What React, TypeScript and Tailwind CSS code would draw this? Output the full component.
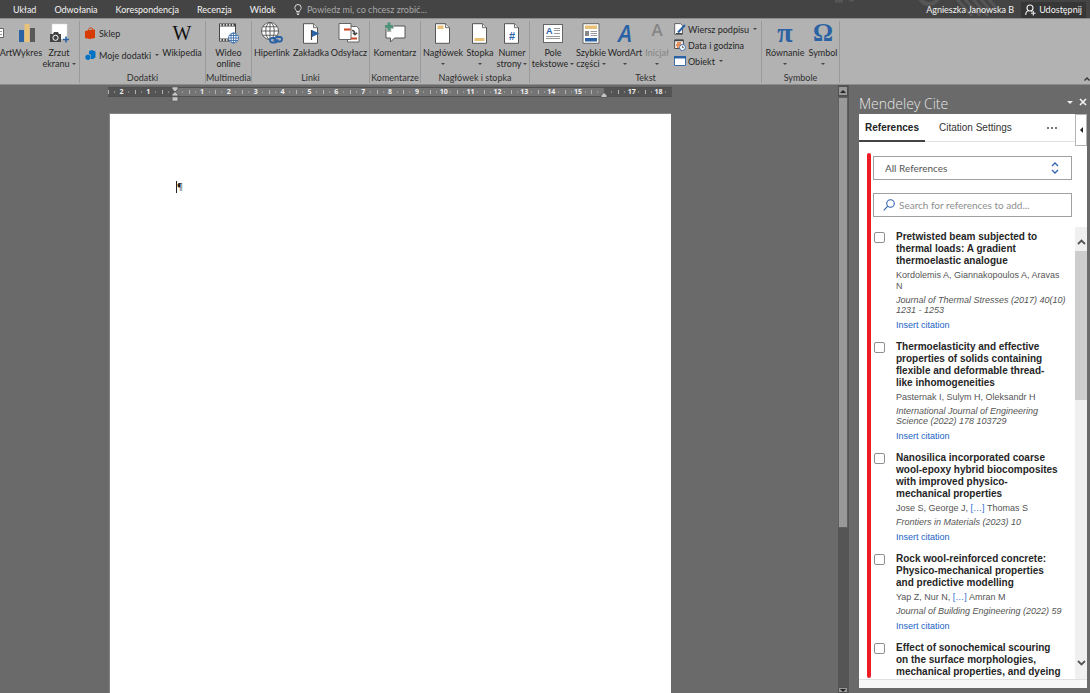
import React from "react";

type Reference = {
  title: string[];
  authors: React.ReactNode;
  journal?: string;
};

const references: Reference[] = [
  {
    title: ["Pretwisted beam subjected to", "thermal loads: A gradient", "thermoelastic analogue"],
    authors: (
      <>
        Kordolemis A, Giannakopoulos A, Aravas
        <br />N
      </>
    ),
    journal: "Journal of Thermal Stresses (2017) 40(10)\n1231 - 1253",
  },
  {
    title: ["Thermoelasticity and effective", "properties of solids containing", "flexible and deformable thread-", "like inhomogeneities"],
    authors: "Pasternak I, Sulym H, Oleksandr H",
    journal: "International Journal of Engineering\nScience (2022) 178 103729",
  },
  {
    title: ["Nanosilica incorporated coarse", "wool-epoxy hybrid biocomposites", "with improved physico-", "mechanical properties"],
    authors: (
      <>
        Jose S, George J, <MoreAuthors /> Thomas S
      </>
    ),
    journal: "Frontiers in Materials (2023) 10",
  },
  {
    title: ["Rock wool-reinforced concrete:", "Physico-mechanical properties", "and predictive modelling"],
    authors: (
      <>
        Yap Z, Nur N, <MoreAuthors /> Amran M
      </>
    ),
    journal: "Journal of Building Engineering (2022) 59",
  },
  {
    title: ["Effect of sonochemical scouring", "on the surface morphologies,", "mechanical properties, and dyeing"],
    authors: "",
  },
];

function MoreAuthors() {
  return <button type="button" className="text-[#2f6fd0]">[…]</button>;
}

function Arrow({ className = "" }: { className?: string }) {
  return (
    <svg viewBox="0 0 4 2" className={`inline-block h-[2px] w-1 shrink-0 fill-[#444] ${className}`}>
      <path d="M0 0h4L2 2z" />
    </svg>
  );
}

function Tool({
  width,
  icon,
  label,
  second,
  arrow,
  disabled,
}: {
  width: string;
  icon: React.ReactNode;
  label: string;
  second?: string;
  arrow?: boolean;
  disabled?: boolean;
}) {
  return (
    <button
      type="button"
      disabled={disabled}
      className={`flex shrink-0 flex-col items-center whitespace-nowrap ${width} ${disabled ? "text-[#858585]" : "text-[#262626]"}`}
    >
      <span className="mb-[2px] flex h-6 items-center justify-center">{icon}</span>
      <span className="leading-[11px]">{label}</span>
      <span className="flex h-[11px] items-center gap-[2px] leading-[11px]">
        {second}
        {arrow && <Arrow />}
      </span>
    </button>
  );
}

function SmallTool({ icon, label, arrow, gap = "ml-1" }: { icon: React.ReactNode; label: string; arrow?: boolean; gap?: string }) {
  return (
    <button type="button" className="flex h-4 items-center whitespace-nowrap text-[#262626]">
      <span className="flex w-[14px] shrink-0 items-center">{icon}</span>
      <span>{label}</span>
      {arrow && <Arrow className={gap} />}
    </button>
  );
}

function Group({ width, name, children }: { width: string; name: string; children: React.ReactNode }) {
  return (
    <section aria-label={name} className={`flex shrink-0 flex-col border-r border-[#999] ${width}`}>
      <div className="flex flex-1">{children}</div>
      <div className="h-[11px] text-center leading-[11px] whitespace-nowrap text-[#303030]">{name}</div>
    </section>
  );
}

const ChartIcon = () => (
  <svg viewBox="0 0 18 20" className="h-5 w-[18px]">
    <path fill="#2a62a4" d="M1 7h5v12H1z" />
    <path fill="#e8c377" d="M6.500 1h5v18h-5z" />
    <path fill="#595959" d="M12 5h5v14h-5z" />
  </svg>
);

const ScreenshotIcon = () => (
  <svg viewBox="0 0 21 21" className="h-[21px] w-[21px]">
    <rect x="3" y="1" width="15" height="15" fill="#fff" stroke="#d8d8d8" strokeDasharray="1.5 1.5" />
    <path fill="#444" d="M1 11h3l1-2h4l1 2h2v8H1z" />
    <circle cx="6.500" cy="14.800" r="2.600" fill="#444" stroke="#fff" strokeWidth="1" />
    <path stroke="#2a62a4" strokeWidth="1.600" d="M17 13.500v6M14 16.500h6" />
  </svg>
);

const StoreIcon = () => (
  <svg viewBox="0 0 11 12" className="h-3 w-[11px]">
    <path fill="#d83b01" d="M0 4l5-1v9l-5-1zM4.800 3L10 2.500V11l-5.200 1z" />
    <path fill="none" stroke="#d83b01" d="M3.500 4V2.500C3.500 1 7 .2 7.500 1.500V3" />
  </svg>
);

const AddinsIcon = () => (
  <svg viewBox="0 0 11 11" className="h-[11px] w-[11px]">
    <path fill="#0072c6" d="M4 1l3-1 3.500 1.500v6L8 9H6V5L4 4z" />
    <path fill="#0072c6" d="M3 4.500l2.500 1.200v3L3 10.200.4 8.800v-3z" />
  </svg>
);

const Globe = ({ x, y, r, color }: { x: number; y: number; r: number; color: string }) => (
  <g fill="#fff" stroke={color} strokeWidth=".9">
    <circle cx={x} cy={y} r={r} />
    <ellipse cx={x} cy={y} rx={r / 2} ry={r} fill="none" />
    <path fill="none" d={`M${x} ${y - r}v${2 * r}M${x - r} ${y}h${2 * r}M${x - r * 0.85} ${y - r / 2}h${r * 1.7}M${x - r * 0.85} ${y + r / 2}h${r * 1.7}`} />
  </g>
);

const VideoIcon = () => (
  <svg viewBox="0 0 22 22" className="h-[22px] w-[22px]">
    <rect x="1" y="1.500" width="17" height="18" fill="#444" />
    <rect x="2" y="4.500" width="15" height="12" fill="#fff" />
    <path stroke="#fff" strokeWidth="1.500" strokeDasharray="1.500 1.500" d="M2 3h15M2 18h15" />
    <Globe x={15.5} y={16} r={5} color="#3e70ad" />
  </svg>
);

const LinkIcon = () => (
  <svg viewBox="0 0 24 24" className="h-6 w-6">
    <Globe x={10} y={10} r={8.5} color="#505050" />
    <g fill="#b2b2b2" stroke="#2a62a4" strokeWidth="1.800">
      <rect x="10" y="17" width="7" height="4.500" rx="2.200" />
      <rect x="15" y="16" width="7" height="4.500" rx="2.200" />
      <path d="M13.500 19.200h5" />
    </g>
  </svg>
);

const Sheet = ({ children }: { children?: React.ReactNode }) => (
  <svg viewBox="0 0 18 21" className="h-[21px] w-[18px]">
    <path fill="#fff" stroke="#555" d="M1.500.7h10l4 4v15.600h-14z" />
    <path fill="#e4e4e4" stroke="#555" strokeWidth=".8" d="M11.500.7v4h4" />
    {children}
  </svg>
);

const BookmarkIcon = () => (
  <Sheet>
    <path stroke="#444" strokeWidth="1.200" d="M9.500 7v10" />
    <path fill="#2a62a4" d="M10 7l7.500 3.500L10 14z" />
  </Sheet>
);

const CrossRefIcon = () => (
  <svg viewBox="0 0 22 22" className="h-[22px] w-[22px]">
    <path fill="#fff" stroke="#666" d="M9.500 4.500h9l2.500 2.500v13H9.500z" />
    <path fill="#fff" stroke="#666" d="M1 1.500h12v16H1z" />
    <path fill="#cc4628" d="M6 6.500h6.500v2H6zM13 15.500h6v2h-6z" />
    <path fill="none" stroke="#444" strokeWidth="1.300" d="M14 8.500c2.500 0 3 1.500 3 4M14.800 10.800l2.200 2 2.200-2" />
  </svg>
);

const CommentIcon = () => (
  <svg viewBox="0 0 22 22" className="h-[22px] w-[22px]">
    <path fill="#fff" stroke="#555" d="M2 4h19v12H10.500L6.500 20v-4H2z" />
    <path stroke="#b2b2b2" strokeWidth="4.500" d="M5 0v10M0 4.500h10" />
    <path stroke="#4e9279" strokeWidth="2.800" d="M5 .5v8M1 4.500h8" />
  </svg>
);

const TextBoxIcon = () => (
  <span className="relative flex h-[19px] w-5 border border-[#666] bg-white">
    <span className="pl-[2px] font-['Liberation_Sans'] text-[9px] leading-[12px] font-bold text-[#2a62a4]">A</span>
    <svg viewBox="0 0 18 17" className="absolute inset-0 h-full w-full">
      <path stroke="#999" d="M10 3.500h6M10 5.500h6M10 8.500h6M2 11.500h14M2 13.500h14" />
    </svg>
  </span>
);

const QuickPartsIcon = () => (
  <svg viewBox="0 0 18 21" className="h-[21px] w-[18px]">
    <path fill="#fff" stroke="#666" d="M1 .7h16v19.600H1z" />
    <path fill="#e8c377" d="M3 2.500h12v3.500H3z" />
    <path fill="#888" d="M3 8h4v5H3z" />
    <path stroke="#999" d="M8.500 8.500H15M8.500 10.500H15M8.500 12.500H15" />
    <path fill="#2a62a4" d="M3 15h12v3.500H3z" />
  </svg>
);

const SignatureIcon = () => (
  <svg viewBox="0 0 12 12" className="h-3 w-3">
    <path fill="#fff" stroke="#555" strokeWidth=".9" d="M.7.6h5.800l2 2v8.800H.7z" />
    <path stroke="#2a62a4" strokeWidth="2" d="M4 9.500L11 2" />
    <path stroke="#444" d="M2 10.500h6" />
  </svg>
);

const DateIcon = () => (
  <svg viewBox="0 0 12 12" className="h-3 w-3">
    <path fill="#eee" stroke="#444" strokeWidth=".9" d="M.6 1h8.800v8.500H.6z" />
    <path fill="#444" d="M.6.600h8.800v1.600H.6z" />
    <path fill="#e8915b" d="M3 3h4v2h1v2H5v2H3V7H2V5h1z" />
    <circle cx="8.500" cy="8.500" r="3" fill="#fff" stroke="#3e70ad" />
    <path fill="none" stroke="#444" strokeWidth=".8" d="M8.500 6.800v1.900h1.500" />
  </svg>
);

const ObjectIcon = () => (
  <svg viewBox="0 0 12 10" className="h-[10px] w-3">
    <path fill="#fff" stroke="#2a62a4" strokeWidth=".9" d="M.5.500h11v9H.5z" />
    <path fill="#2a62a4" d="M0 0h12v2.500H0z" />
  </svg>
);

function Ribbon() {
  return (
    <div className="flex h-[67px] shrink-0 border-t border-b border-t-[#8c8c8c] border-b-[#8c8c8c] bg-[#b2b2b2] pt-[2px] pb-[1px]">
      <Group width="w-20" name="">
        <Tool
          width="w-3"
          icon={
            <svg viewBox="0 0 12 20" className="h-5 w-3">
              <path fill="#fff" stroke="#666" d="M-4 5.500H3.500v9H-4z" />
              <path stroke="#999" d="M0 8.500h2M0 11.500h2" />
            </svg>
          }
          label="Art"
        />
        <Tool width="w-[30px]" icon={<ChartIcon />} label="Wykres" />
        <Tool width="w-[34px]" icon={<ScreenshotIcon />} label="Zrzut" second="ekranu" arrow />
      </Group>
      <Group width="w-[126px]" name="Dodatki">
        <div className="flex w-[82px] flex-col gap-[6px] pt-1 pl-[5px]">
          <SmallTool icon={<StoreIcon />} label="Sklep" />
          <SmallTool icon={<AddinsIcon />} label="Moje dodatki" arrow />
        </div>
        <Tool width="w-10" icon={<span className="font-['Liberation_Serif'] text-[20px] leading-5 text-[#111]">W</span>} label="Wikipedia" />
      </Group>
      <Group width="w-[46px]" name="Multimedia">
        <Tool width="w-full" icon={<VideoIcon />} label="Wideo" second="online" />
      </Group>
      <Group width="w-[118px]" name="Linki">
        <Tool width="w-10" icon={<LinkIcon />} label="Hiperlink" />
        <Tool width="w-[38px]" icon={<BookmarkIcon />} label="Zakładka" />
        <Tool width="w-[38px]" icon={<CrossRefIcon />} label="Odsyłacz" />
      </Group>
      <Group width="w-[51px]" name="Komentarze">
        <Tool width="w-full" icon={<CommentIcon />} label="Komentarz" />
      </Group>
      <Group width="w-[109px]" name="Nagłówek i stopka">
        <Tool width="w-11" icon={<Sheet><path fill="#e8c377" d="M3.500 2.500h6v3.500h-6z" /></Sheet>} label="Nagłówek" arrow />
        <Tool width="w-[30px]" icon={<Sheet><path fill="#e8c377" d="M3.500 15h10v3h-10z" /></Sheet>} label="Stopka" arrow />
        <Tool
          width="w-[34px]"
          icon={
            <span className="grid place-items-center">
              <span className="col-start-1 row-start-1 flex"><Sheet /></span>
              <span className="z-10 col-start-1 row-start-1 pt-[6px] font-['Liberation_Sans'] text-[11px] leading-[11px] font-bold text-[#2a62a4]">#</span>
            </span>
          }
          label="Numer"
          second="strony"
          arrow
        />
      </Group>
      <Group width="w-[232px]" name="Tekst">
        <Tool width="w-[46px]" icon={<TextBoxIcon />} label="Pole" second="tekstowe" arrow />
        <Tool width="w-[30px]" icon={<QuickPartsIcon />} label="Szybkie" second="części" arrow />
        <Tool width="w-[38px]" icon={<span className="font-['Open_Sans'] text-[23px] leading-6 font-semibold text-[#2a62a4] italic">A</span>} label="WordArt" arrow />
        <Tool width="w-[26px]" icon={<span className="pb-[6px] font-['Open_Sans'] text-[17px] leading-4 font-semibold text-[#858585]">A</span>} label="Inicjał" arrow disabled />
        <div className="flex flex-col pl-1">
          <SmallTool icon={<SignatureIcon />} label="Wiersz podpisu" arrow />
          <SmallTool icon={<DateIcon />} label="Data i godzina" />
          <SmallTool icon={<ObjectIcon />} label="Obiekt" arrow />
        </div>
      </Group>
      <Group width="w-[78px]" name="Symbole">
        <Tool width="w-[46px]" icon={<span className="font-['Liberation_Serif'] text-[28px] leading-6 font-bold text-[#2a62a4]">π</span>} label="Równanie" arrow />
        <Tool width="w-[30px]" icon={<span className="font-['Liberation_Serif'] text-[25px] leading-6 font-bold text-[#2a62a4]">Ω</span>} label="Symbol" arrow />
      </Group>
      <button type="button" aria-label="Zwiń wstążkę" className="ml-auto flex items-end pb-[2px]">
        <svg viewBox="0 0 6 4" className="h-1 w-[6px]">
          <path fill="none" stroke="#333" strokeWidth="1.400" d="M.5 3.500L3 1l2.500 2.500" />
        </svg>
      </button>
    </div>
  );
}

function TitleBar() {
  return (
    <header className="relative flex h-[18px] shrink-0 items-center bg-[#444] pt-[1px] pr-1 pl-[13px] whitespace-nowrap text-[#f4f4f4]">
      <svg viewBox="0 0 240 18" className="absolute top-0 right-4 h-[18px] w-[240px]">
        <g fill="none" stroke="#565656">
          <circle cx="95" cy="-6" r="10" strokeWidth="4" />
          <path strokeWidth="3" d="M120-4l18 20M128-4l18 20M136-4l18 20M144-4l14 16M152-4l10 12" />
          <path strokeWidth="3" d="M1 1h8M15 0h5" />
        </g>
      </svg>
      <nav className="flex gap-[18px]">
        {["Układ", "Odwołania", "Korespondencja", "Recenzja", "Widok"].map((t) => (
          <button type="button" key={t}>{t}</button>
        ))}
      </nav>
      <button type="button" className="ml-[18px] flex items-center gap-[5px] text-[#a8a8a8]">
        <svg viewBox="0 0 8 11" className="h-[11px] w-2">
          <path fill="none" stroke="#ddd" d="M2.500 7.500C2.500 6 .8 5.500.8 3.700a3.200 3.200 0 016.400 0C7.200 5.500 5.500 6 5.500 7.500zM2.500 9h3M3 10.500h2" />
        </svg>
        Powiedz mi, co chcesz zrobić...
      </button>
      <span className="relative ml-auto">Agnieszka Janowska B</span>
      <button type="button" className="relative ml-[7px] flex h-4 items-center gap-[3px] bg-[#363636] px-1">
        <svg viewBox="0 0 11 12" className="h-3 w-[11px]">
          <g fill="none" stroke="#f0f0f0" strokeWidth="1.100">
            <circle cx="5" cy="4" r="3" />
            <path d="M.7 11c0-2.500 1.200-4 3-4.500M6 6.500l1.200 1M8.300 7v4.500M6 9.300h4.600" />
          </g>
        </svg>
        Udostępnij
      </button>
    </header>
  );
}

const rulerMarks = Array.from({ length: 21 }, (_, i) => i - 2);

function Ruler() {
  return (
    <div className="relative ml-[108px] flex h-[10px] w-[564px] border-y border-[#505050] bg-[#747474] font-['Open_Sans'] text-[7px] leading-2 font-bold text-[#eee]">
      {rulerMarks.map((n) => (
        <div
          key={n}
          className={`relative flex flex-1 items-center justify-center ${n < 0 || n > 16 ? "bg-[#545454]" : ""} ${n === 0 ? "bg-linear-to-r from-[#545454] from-50% to-[#747474] to-50%" : ""} ${n === 16 ? "bg-linear-to-r from-[#747474] from-50% to-[#545454] to-50%" : ""}`}
        >
          <svg viewBox="0 0 27 8" preserveAspectRatio="none" className="absolute inset-0 h-full w-full">
            <path fill="#b5b5b5" d="M0 2h1v4H0zM6 3.500h1.200v1H6zM20 3.500h1.200v1H20z" />
          </svg>
          {n !== 0 && n !== 16 && <span className="relative">{Math.abs(n)}</span>}
        </div>
      ))}
      <svg viewBox="0 0 8 16" className="absolute -top-[2px] left-[63px] h-4 w-2">
        <path fill="#c4c4c4" stroke="#505050" strokeWidth=".8" d="M1 .8h6V3L4 6 1 3zM1 10V8.500l3-3 3 3V10zM1 10.800h6v4.400H1z" />
      </svg>
      <svg viewBox="0 0 8 6" className="absolute top-1 left-[492px] h-[6px] w-2">
        <path fill="#c4c4c4" stroke="#505050" strokeWidth=".8" d="M1 5.500V3.500l3-3 3 3v2z" />
      </svg>
    </div>
  );
}

function DocumentArea() {
  return (
    <main className="flex min-w-0 flex-1">
      <div className="flex min-w-0 flex-1 flex-col overflow-hidden pt-[2px]">
        <Ruler />
        <div className="mt-[16px] ml-[109px] w-[562px] flex-1 border-t border-l border-[#858585] bg-white">
          <p className="mt-[67px] ml-[66px] flex h-3 w-2 items-center border-l border-[#222] font-['Open_Sans'] text-[9px] leading-3 text-[#222]">¶</p>
        </div>
      </div>
      <div className="flex w-[10px] shrink-0 flex-col bg-[#555] pt-[1px]">
        <button type="button" aria-label="Przewiń w górę" className="flex h-[10px] items-center justify-center border border-[#505050] bg-[#999]">
          <svg viewBox="0 0 6 3" className="h-[3px] w-[6px]"><path fill="#222" d="M0 3h6L3 0z" /></svg>
        </button>
        <div className="mt-[1px] flex flex-1 flex-col">
          <div className="basis-[73%] border border-[#606060] bg-[#999]" />
        </div>
        <button type="button" aria-label="Przewiń w dół" className="flex h-[6px] items-center justify-center border border-[#505050] bg-[#999]">
          <svg viewBox="0 0 6 3" className="h-[3px] w-[6px]"><path fill="#222" d="M0 0h6L3 3z" /></svg>
        </button>
      </div>
    </main>
  );
}

function ReferenceItem({ item, index }: { item: Reference; index: number }) {
  const id = `reference-${index}`;
  return (
    <li className="flex items-start pb-[10px] text-[9px]">
      <input id={id} type="checkbox" className="mt-[1px] h-[11px] w-[11px] shrink-0 appearance-none rounded-[2px] border border-[#8f8f8f] bg-white" />
      <div className="ml-[11px] whitespace-nowrap text-[#555]">
        <label htmlFor={id} className="block text-[10px] leading-3 font-bold text-[#262626]">
          {item.title.map((line) => (
            <span key={line} className="block">{line}</span>
          ))}
        </label>
        <p className="mt-[3px] leading-[11px]">{item.authors}</p>
        {item.journal && (
          <>
            <p className="mt-[3px] leading-[10px] whitespace-pre italic">{item.journal}</p>
            <button type="button" className="mt-1 block leading-3 text-[#2063c4]">Insert citation</button>
          </>
        )}
      </div>
    </li>
  );
}

function MendeleyPane() {
  return (
    <aside className="flex w-[242px] shrink-0 flex-col border-l border-[#555] pr-[3px] pb-[5px] pl-[10px]">
      <div className="flex h-[29px] items-center pt-[9px] text-[#e6e6e6]">
        <h2 className="flex-1 font-['Open_Sans'] text-[14px] leading-5 font-light">Mendeley Cite</h2>
        <button type="button" aria-label="Opcje okienka" className="-mt-1 mr-[6px]">
          <svg viewBox="0 0 6 3" className="h-[3px] w-[6px]"><path fill="#eee" d="M0 0h6L3 3z" /></svg>
        </button>
        <button type="button" aria-label="Zamknij" className="-mt-1">
          <svg viewBox="0 0 8 8" className="h-2 w-2"><path stroke="#f4f4f4" strokeWidth="1.600" d="M1 1l6 6M7 1L1 7" /></svg>
        </button>
      </div>
      <div className="relative flex min-h-0 flex-1 flex-col bg-white font-['Liberation_Sans',sans-serif]">
        <button type="button" aria-label="Zwiń" className="absolute top-0 right-0 flex h-8 w-3 items-center justify-center border border-[#b5b5b5] bg-white">
          <svg viewBox="0 0 3 6" className="h-[6px] w-[3px]"><path fill="#222" d="M3 0v6L0 3z" /></svg>
        </button>
        <div role="tablist" className="mr-3 flex h-7 items-stretch border-b border-[#e2e2e2] text-[10px] text-[#333]">
          <button type="button" role="tab" aria-selected="true" className="-mb-px w-[66px] border-b-2 border-[#444] text-center font-bold text-[#222]">References</button>
          <button type="button" role="tab" aria-selected="false" className="ml-[14px]">Citation Settings</button>
          <button type="button" aria-label="Więcej" className="mr-[18px] ml-auto">
            <svg viewBox="0 0 10 2" className="h-[2px] w-[10px]"><path fill="#777" d="M0 0h2v2H0zM4 0h2v2H4zM8 0h2v2H8z" /></svg>
          </button>
        </div>
        <div className="flex min-h-0 flex-1 pt-[11px] pl-2">
          <div className="mb-[1px] w-1 shrink-0 rounded-sm bg-[#ed1c24]" />
          <div className="flex min-w-0 flex-1 flex-col pt-[3px]">
            <div className="relative mr-[15px] ml-[2px]">
              <select aria-label="Collection" className="block h-6 w-full appearance-none border border-[#a0a0a0] bg-white pl-[11px] font-['Lato','Noto_Sans',sans-serif] text-[10px] text-[#555]">
                <option>All References</option>
              </select>
              <svg viewBox="0 0 8 12" className="pointer-events-none absolute top-[6px] right-[13px] h-3 w-2">
                <path fill="none" stroke="#2f62b0" strokeWidth="1.300" d="M1 4l3-3 3 3M1 8l3 3 3-3" />
              </svg>
            </div>
            <div className="mt-[13px] mr-[15px] ml-[2px] flex h-6 items-center border border-[#a0a0a0] pl-[9px]">
              <svg viewBox="0 0 12 12" className="h-3 w-3 shrink-0">
                <g fill="none" stroke="#2f62b0" strokeWidth="1.100">
                  <circle cx="7.500" cy="4.500" r="3.800" />
                  <path d="M4.800 7.200L.7 11.300" />
                </g>
              </svg>
              <input
                type="text"
                aria-label="Search for references"
                placeholder="Search for references to add..."
                className="ml-1 h-5 min-w-0 flex-1 font-['Lato','Noto_Sans',sans-serif] text-[10px] text-[#444] outline-none placeholder:text-[#8e8e8e]"
              />
            </div>
            <div className="mt-[10px] flex min-h-0 flex-1">
              <ul className="min-w-0 flex-1 overflow-hidden pt-1 pl-[3px]">
                {references.map((item, i) => (
                  <ReferenceItem key={item.title[0]} item={item} index={i} />
                ))}
              </ul>
              <div className="flex w-3 shrink-0 flex-col bg-[#f0f0f0]">
                <button type="button" aria-label="Scroll up" className="flex h-6 items-center justify-center pt-[6px]">
                  <svg viewBox="0 0 9 6" className="h-[6px] w-[9px]"><path fill="none" stroke="#555" strokeWidth="1.800" d="M1 5l3.500-3.500L8 5" /></svg>
                </button>
                <div className="flex flex-1 flex-col"><div className="basis-[37%] bg-[#cdcdcd]" /></div>
                <button type="button" aria-label="Scroll down" className="flex h-[26px] items-center justify-center pb-[6px]">
                  <svg viewBox="0 0 9 6" className="h-[6px] w-[9px]"><path fill="none" stroke="#555" strokeWidth="1.800" d="M1 1l3.500 3.500L8 1" /></svg>
                </button>
              </div>
            </div>
          </div>
        </div>
        <div className="h-[9px] shrink-0 border-t border-[#e0e0e0] bg-[#f8f8f8]" />
      </div>
    </aside>
  );
}

export default function App() {
  return (
    <div className="flex h-screen flex-col overflow-hidden bg-[#6a6a6a] font-['Lato','Noto_Sans',sans-serif] text-[9px] leading-[11px]">
      <TitleBar />
      <Ribbon />
      <div className="flex min-h-0 flex-1">
        <DocumentArea />
        <MendeleyPane />
      </div>
    </div>
  );
}
